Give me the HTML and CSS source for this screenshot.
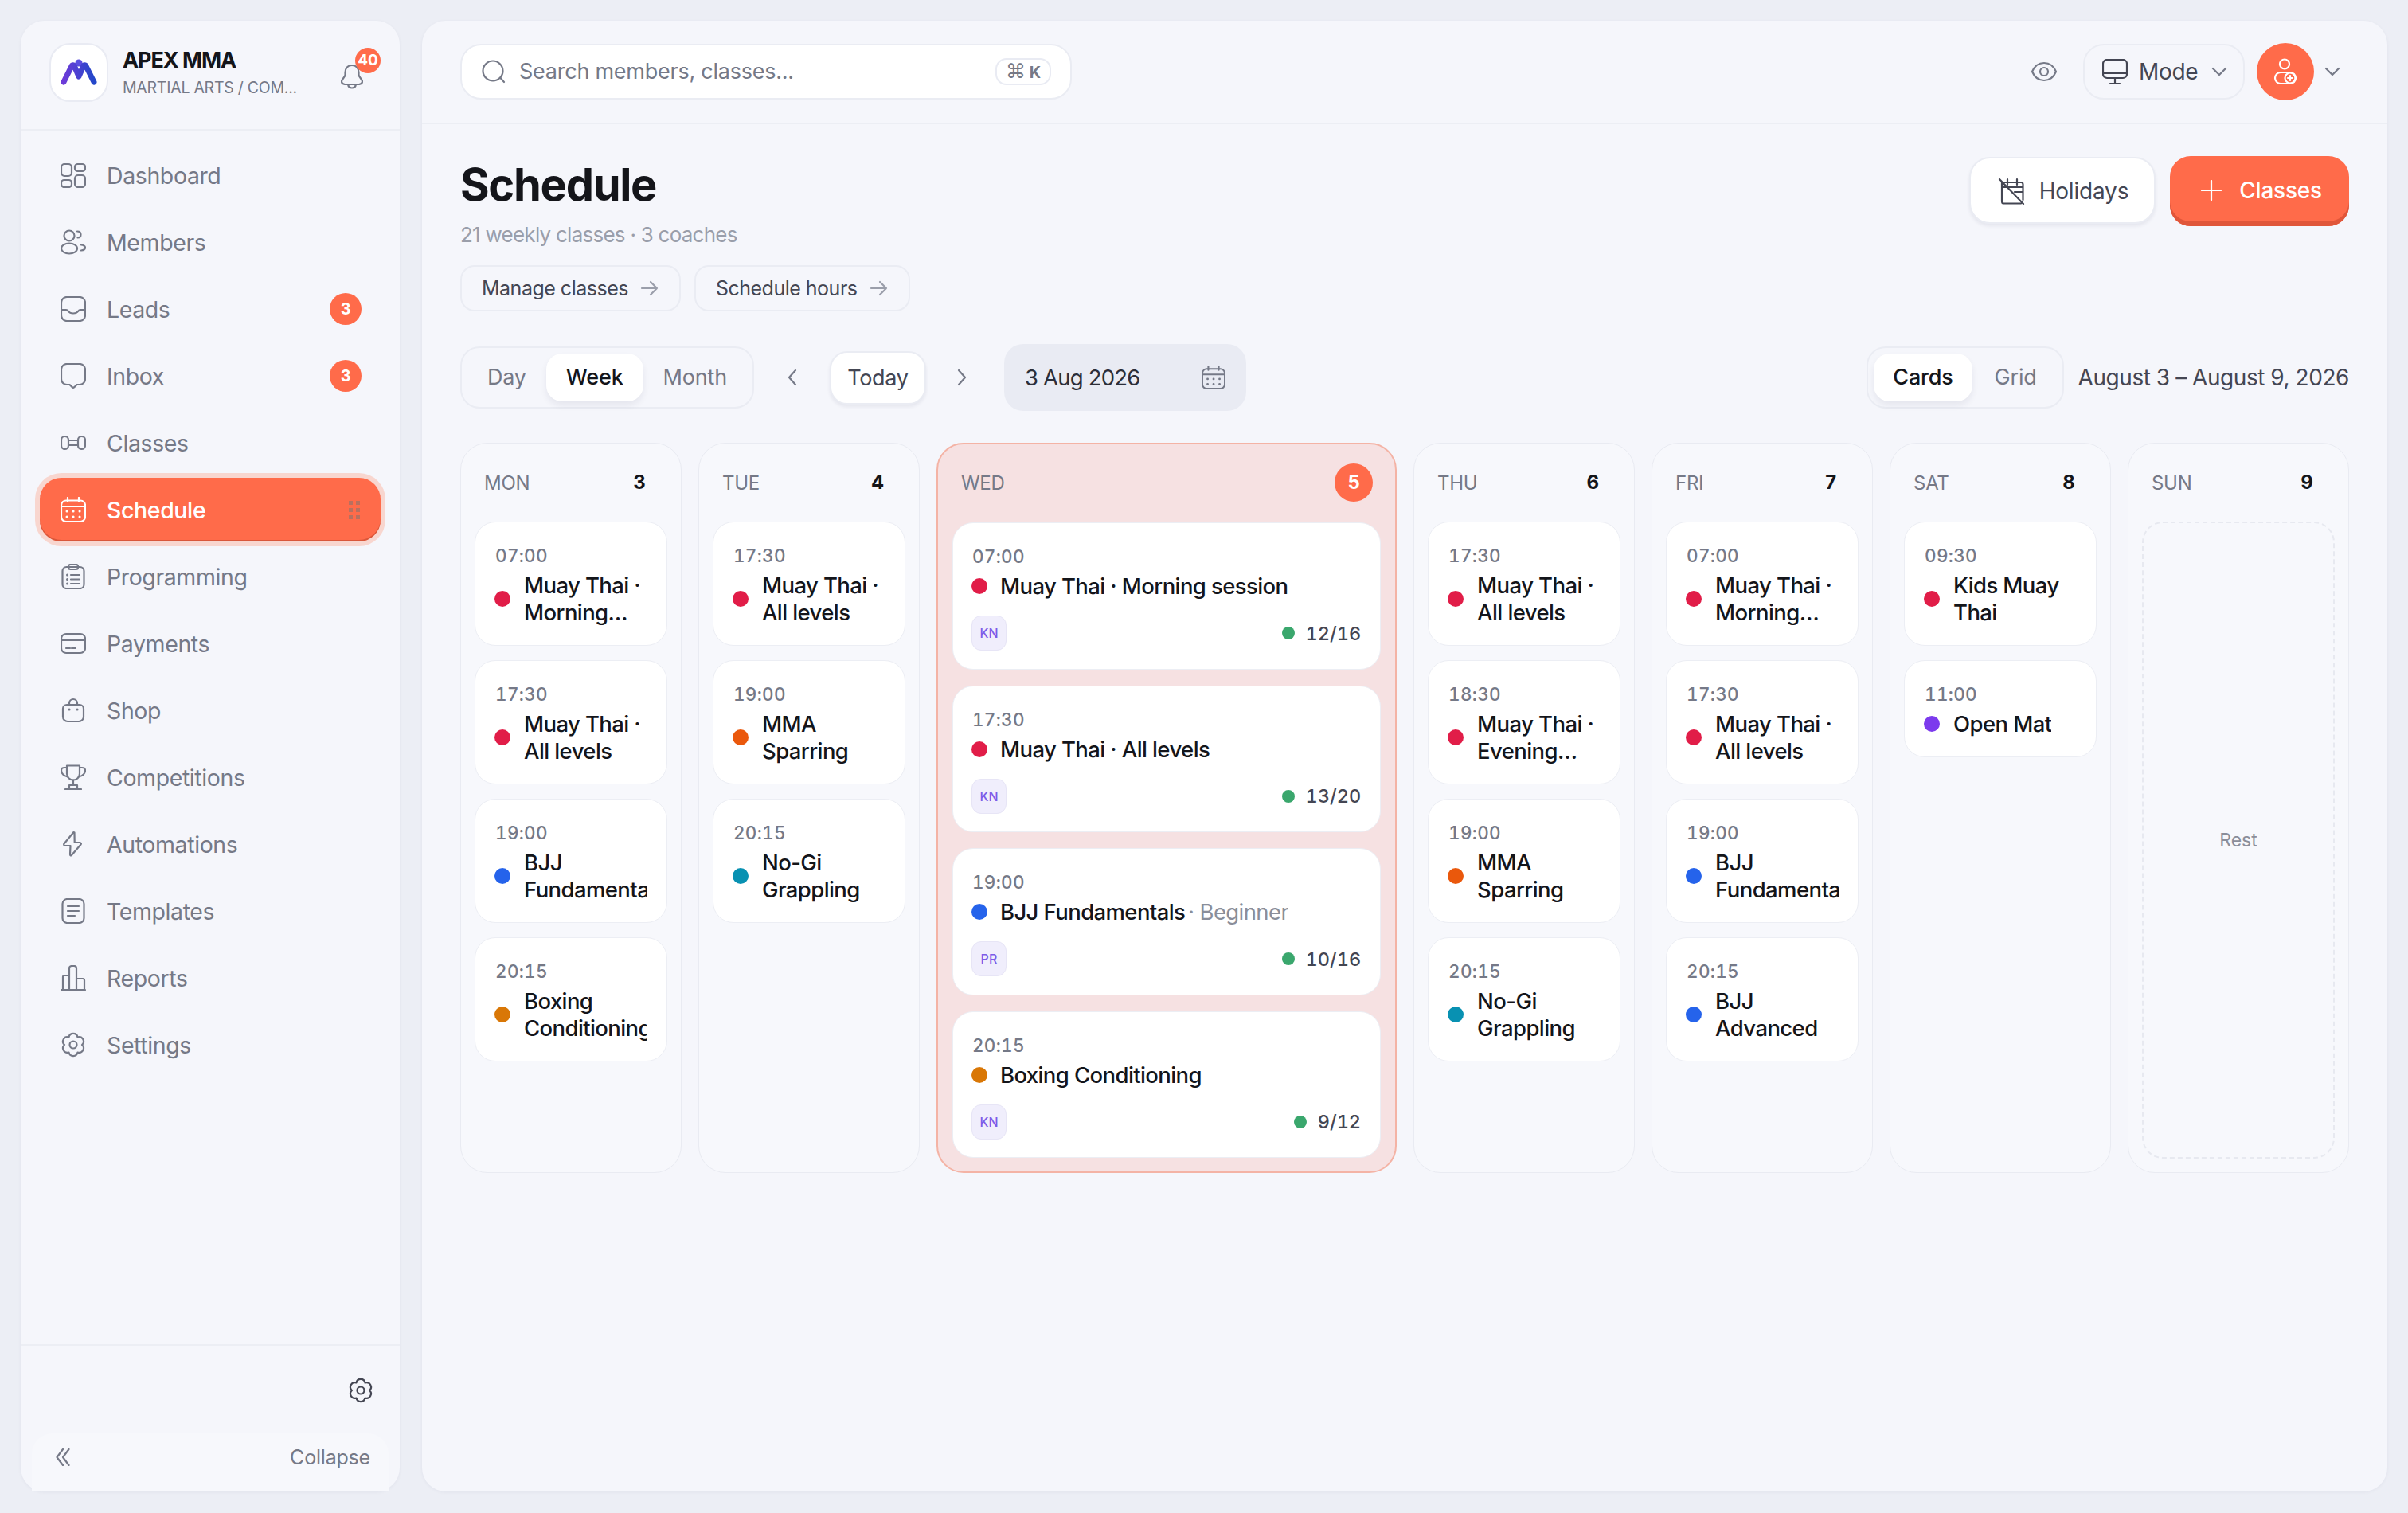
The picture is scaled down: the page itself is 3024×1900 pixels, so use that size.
FILE: index.html
```html
<!DOCTYPE html>
<html>
  <head>
    <title>Schedule</title>
    <link rel="stylesheet" href="styles.css">
  </head>
  <body>
    <svg class="defs" width="0" height="0">
      <symbol id="gear" viewBox="0 0 32 32">
        <path d="M10.5 6.47A5.6 5.6 0 0 1 21.5 6.47A5.6 5.6 0 0 1 27 16A5.6 5.6 0 0 1 21.5 25.53A5.6 5.6 0 0 1 10.5 25.53A5.6 5.6 0 0 1 5 16A5.6 5.6 0 0 1 10.5 6.47Z"/>
        <circle cx="16" cy="16" r="4.5"/>
      </symbol>
      <symbol id="chev-down" viewBox="0 0 20 12">
        <path d="M2 2l8 8 8-8"/>
      </symbol>
      <symbol id="arrow" viewBox="0 0 24 20">
        <path d="M2 10h19M13 2l8 8-8 8"/>
      </symbol>
    </svg>

    <div class="app">
      <aside class="sidebar">
        <div class="brand">
          <div class="brand-logo">
            <svg width="46" height="34" viewBox="0 0 46 34">
              <defs>
                <linearGradient id="logo-grad" x1="0" y1="0" x2="1" y2="0">
                  <stop offset="0" stop-color="#6d3bd8"/>
                  <stop offset="1" stop-color="#2347c9"/>
                </linearGradient>
              </defs>
              <circle cx="23" cy="5" r="4.5" fill="#5b4ee0"/>
              <path d="M4 29L14 9c.8-1.6 2.6-1.6 3.4 0L23 22l5.6-13c.8-1.6 2.6-1.6 3.4 0l10 20" fill="none" stroke="url(#logo-grad)" stroke-width="7" stroke-linecap="round" stroke-linejoin="round"/>
            </svg>
          </div>
          <div class="brand-text">
            <div class="brand-name">APEX MMA</div>
            <div class="brand-sub">MARTIAL ARTS / COM...</div>
          </div>
          <div class="bell">
            <svg class="ico" width="28" height="32" viewBox="0 0 28 32">
              <path d="M14 2C8.5 2 5.5 6 5.5 11v3c0 3-4.500 5-4.500 8.500 0 2 2 3 4 3.500h18c2-.5 4-1.500 4-3.500 0-3.500-4.500-5.500-4.500-8.500v-3C22.500 6 19.500 2 14 2z"/>
              <path d="M9 26c.5 3 2.500 4.500 5 4.500s4.500-1.500 5-4.500"/>
            </svg>
            <span class="bell-badge">40</span>
          </div>
        </div>

        <nav class="nav">
          <a class="nav-item">
            <svg class="ico" width="32" height="32" viewBox="0 0 32 32"><rect x="1" y="2" width="13" height="15" rx="4"/><rect x="1" y="22" width="13" height="9" rx="3.500"/><rect x="18" y="2" width="13" height="9" rx="3.500"/><rect x="18" y="16" width="13" height="15" rx="4"/></svg>
            <span>Dashboard</span>
          </a>
          <a class="nav-item">
            <svg class="ico" width="32" height="32" viewBox="0 0 32 32"><ellipse cx="11" cy="8" rx="6.500" ry="6.500"/><ellipse cx="11" cy="24" rx="10" ry="6.500"/><path d="M21 2.500c3 0 4.500 1.500 4.500 4s-1.500 4-4 4M26 19.500c3.500.5 5 2 5 3.500s-1.500 3-5 3.500"/></svg>
            <span>Members</span>
          </a>
          <a class="nav-item">
            <svg class="ico" width="32" height="32" viewBox="0 0 32 32"><rect x="1" y="1" width="30" height="30" rx="7"/><path d="M1 17h6c1.500 0 2 .6 3 2 1 1.500 2.500 2.500 6 2.500s5-1 6-2.500c1-1.400 1.500-2 3-2h6"/></svg>
            <span>Leads</span>
            <em class="nav-badge">3</em>
          </a>
          <a class="nav-item">
            <svg class="ico" width="32" height="32" viewBox="0 0 32 32"><path d="M8 1h16a7 7 0 0 1 7 7v12a7 7 0 0 1-7 7h-3.500l-3.200 3.200a2 2 0 0 1-2.600 0L11.500 27H8a7 7 0 0 1-7-7V8a7 7 0 0 1 7-7z"/></svg>
            <span>Inbox</span>
            <em class="nav-badge">3</em>
          </a>
          <a class="nav-item">
            <svg class="ico" width="32" height="32" viewBox="0 0 32 32"><rect x="1" y="8" width="9" height="16" rx="4.500"/><rect x="22" y="8" width="9" height="16" rx="4.500"/><path d="M10 13h12M10 19h12"/></svg>
            <span>Classes</span>
          </a>
          <a class="nav-item active">
            <svg class="ico" width="32" height="32" viewBox="0 0 32 32"><rect x="1" y="4.500" width="30" height="26.500" rx="6"/><path d="M1 12h30M9 1v5M23 1v5"/><path class="dots" d="M8 18h.1M16 18h.1M24 18h.1M8 25h.1M16 25h.1M24 25h.1"/></svg>
            <span>Schedule</span>
            <i class="grip"><b></b><b></b><b></b><b></b><b></b><b></b></i>
          </a>
          <a class="nav-item">
            <svg class="ico" width="32" height="32" viewBox="0 0 32 32"><rect x="2.500" y="4" width="27" height="27" rx="5"/><rect x="10" y="1" width="12" height="6" rx="2.500"/><path d="M13 14h11M13 19.500h11M13 25h11"/><path class="dots" d="M8.500 14h.1M8.500 19.500h.1M8.500 25h.1"/></svg>
            <span>Programming</span>
          </a>
          <a class="nav-item">
            <svg class="ico" width="32" height="32" viewBox="0 0 32 32"><rect x="1" y="4" width="30" height="24" rx="6"/><path d="M1 12h30M7 22h5M14 22h5"/></svg>
            <span>Payments</span>
          </a>
          <a class="nav-item">
            <svg class="ico" width="32" height="32" viewBox="0 0 32 32"><path d="M3 14a5 5 0 0 1 5-5h16a5 5 0 0 1 5 5v10a6 6 0 0 1-6 6H9a6 6 0 0 1-6-6z"/><path d="M11 9V7a5 5 0 0 1 10 0v2"/><path class="dots" d="M11 15h.1M21 15h.1"/></svg>
            <span>Shop</span>
          </a>
          <a class="nav-item">
            <svg class="ico" width="32" height="32" viewBox="0 0 32 32"><path d="M8 1.500h16v10a8 8 0 0 1-16 0z"/><path d="M8 4H5C2.500 4 1 5.500 1 7.500 1 11 4 14.500 9 15.500M24 4h3c2.500 0 4 1.500 4 3.500 0 3.500-3 7-8 8M16 19.500v6M11 26h10v4.500M11 26v4.500M6 31h20"/></svg>
            <span>Competitions</span>
          </a>
          <a class="nav-item">
            <svg class="ico" width="32" height="32" viewBox="0 0 32 32"><path d="M17.500 1.500c-.7-.5-1.500 0-2 .7L4.500 15.500c-.7 1-.2 2.500 1.300 2.500h6.700l-.5 11c0 1.500 1.200 2 2.100.8l11.400-13.300c.8-1 .3-2.500-1.300-2.500h-6.500z"/></svg>
            <span>Automations</span>
          </a>
          <a class="nav-item">
            <svg class="ico" width="32" height="32" viewBox="0 0 32 32"><rect x="2.500" y="1" width="27" height="30" rx="6"/><path d="M9 10h14M9 16h14M9 22h9"/></svg>
            <span>Templates</span>
          </a>
          <a class="nav-item">
            <svg class="ico" width="32" height="32" viewBox="0 0 32 32"><path d="M1 31h30M3 31V15a2 2 0 0 1 2-2h6M11 31V4a3 3 0 0 1 3-3h3a3 3 0 0 1 3 3v27M20 17h8a2 2 0 0 1 2 2v12"/></svg>
            <span>Reports</span>
          </a>
          <a class="nav-item">
            <svg class="ico" width="32" height="32"><use href="#gear"/></svg>
            <span>Settings</span>
          </a>
        </nav>

        <div class="side-foot">
          <div class="side-gear">
            <svg class="ico dark" width="32" height="32"><use href="#gear"/></svg>
          </div>
          <div class="collapse">
            <svg class="ico" width="18" height="22" viewBox="0 0 18 22"><path d="M9 1L1.500 11 9 21M16.500 1L9 11l7.500 10"/></svg>
            <span>Collapse</span>
          </div>
        </div>
      </aside>

      <main class="main">
        <header class="topbar">
          <div class="search">
            <svg class="ico" width="30" height="30" viewBox="0 0 30 30"><circle cx="14" cy="14" r="12.500"/><path d="M23.500 23l4.500 5"/></svg>
            <span class="search-text">Search members, classes...</span>
            <span class="kbd"><i>⌘</i> K</span>
          </div>
          <div class="top-right">
            <svg class="ico eye" width="32" height="32" viewBox="0 0 32 32"><path d="M1 16c3-7 8-11 15-11s12 4 15 11c-3 7-8 11-15 11S4 23 1 16z"/><circle cx="16" cy="16" r="5"/></svg>
            <div class="mode">
              <svg class="ico dark" width="32" height="32" viewBox="0 0 32 32"><rect x="1" y="1" width="30" height="23" rx="5"/><path d="M1 18h30M16 24v7M10 31h12"/></svg>
              <span>Mode</span>
              <svg class="ico chev" width="20" height="12"><use href="#chev-down"/></svg>
            </div>
            <div class="avatar">
              <svg class="ico" width="32" height="34" viewBox="0 0 32 34"><circle cx="15" cy="7.500" r="6"/><rect x="3" y="18" width="26" height="14" rx="7"/><circle cx="22" cy="25" r="6.500"/><path d="M22 22v6M19 25h6"/></svg>
            </div>
            <svg class="ico chev" width="20" height="12"><use href="#chev-down"/></svg>
          </div>
        </header>

        <div class="content">
          <div class="page-head">
            <div>
              <h1>Schedule</h1>
              <p class="subtitle">21 weekly classes · 3 coaches</p>
              <div class="links">
                <a class="link-btn">Manage classes <svg class="ico" width="24" height="20"><use href="#arrow"/></svg></a>
                <a class="link-btn">Schedule hours <svg class="ico" width="24" height="20"><use href="#arrow"/></svg></a>
              </div>
            </div>
            <div class="actions">
              <button class="btn-white">
                <svg class="ico dark" width="34" height="34" viewBox="0 0 34 34"><path d="M5 6v24c0 1.500 1 2.500 2.500 2.500H29M5 6h24c1.500 0 2.500 1 2.500 2.500V28M5 12h26M12 2v7M24 2v7M2 2l30 31M21 18h10"/></svg>
                Holidays
              </button>
              <button class="btn-primary">
                <svg class="ico" width="26" height="26" viewBox="0 0 26 26"><path d="M13 1v24M1 13h24"/></svg>
                Classes
              </button>
            </div>
          </div>

          <div class="toolbar">
            <div class="segment">
              <span>Day</span>
              <span class="on">Week</span>
              <span>Month</span>
            </div>
            <svg class="ico pager" width="12" height="22" viewBox="0 0 12 22"><path d="M10 2L2 11l8 9"/></svg>
            <button class="today">Today</button>
            <svg class="ico pager next" width="12" height="22" viewBox="0 0 12 22"><path d="M2 2l8 9-8 9"/></svg>
            <div class="datebox">
              <span>3 Aug 2026</span>
              <svg class="ico" width="30" height="30" viewBox="0 0 32 32"><rect x="1" y="4.500" width="30" height="26.500" rx="6"/><path d="M1 12h30M9 1v5M23 1v5"/><path class="dots" d="M8 18h.1M16 18h.1M24 18h.1M8 25h.1M16 25h.1M24 25h.1"/></svg>
            </div>
            <div class="toolbar-right">
              <div class="segment small">
                <span class="on">Cards</span>
                <span>Grid</span>
              </div>
              <span class="range">August 3 – August 9, 2026</span>
            </div>
          </div>

          <div class="week">
            <section class="day">
              <div class="day-head"><span>MON</span><b>3</b></div>
              <div class="card"><div class="time">07:00</div><div class="cls"><i class="dot red"></i><div class="name">Muay Thai · Morning session</div></div></div>
              <div class="card"><div class="time">17:30</div><div class="cls"><i class="dot red"></i><div class="name">Muay Thai · All levels</div></div></div>
              <div class="card"><div class="time">19:00</div><div class="cls"><i class="dot blue"></i><div class="name">BJJ Fundamentals</div></div></div>
              <div class="card"><div class="time">20:15</div><div class="cls"><i class="dot amber"></i><div class="name">Boxing Conditioning</div></div></div>
            </section>

            <section class="day">
              <div class="day-head"><span>TUE</span><b>4</b></div>
              <div class="card"><div class="time">17:30</div><div class="cls"><i class="dot red"></i><div class="name">Muay Thai · All levels</div></div></div>
              <div class="card"><div class="time">19:00</div><div class="cls"><i class="dot orange"></i><div class="name">MMA Sparring</div></div></div>
              <div class="card"><div class="time">20:15</div><div class="cls"><i class="dot teal"></i><div class="name">No-Gi Grappling</div></div></div>
            </section>

            <section class="day today-col">
              <div class="day-head"><span>WED</span><b>5</b></div>
              <div class="card">
                <div class="time">07:00</div>
                <div class="cls"><i class="dot red"></i><div class="name">Muay Thai · Morning session</div></div>
                <div class="card-foot"><span class="chip">KN</span><span class="count"><i></i>12/16</span></div>
              </div>
              <div class="card">
                <div class="time">17:30</div>
                <div class="cls"><i class="dot red"></i><div class="name">Muay Thai · All levels</div></div>
                <div class="card-foot"><span class="chip">KN</span><span class="count"><i></i>13/20</span></div>
              </div>
              <div class="card">
                <div class="time">19:00</div>
                <div class="cls"><i class="dot blue"></i><div class="name">BJJ Fundamentals <small>· Beginner</small></div></div>
                <div class="card-foot"><span class="chip">PR</span><span class="count"><i></i>10/16</span></div>
              </div>
              <div class="card">
                <div class="time">20:15</div>
                <div class="cls"><i class="dot amber"></i><div class="name">Boxing Conditioning</div></div>
                <div class="card-foot"><span class="chip">KN</span><span class="count"><i></i>9/12</span></div>
              </div>
            </section>

            <section class="day">
              <div class="day-head"><span>THU</span><b>6</b></div>
              <div class="card"><div class="time">17:30</div><div class="cls"><i class="dot red"></i><div class="name">Muay Thai · All levels</div></div></div>
              <div class="card"><div class="time">18:30</div><div class="cls"><i class="dot red"></i><div class="name">Muay Thai · Evening session</div></div></div>
              <div class="card"><div class="time">19:00</div><div class="cls"><i class="dot orange"></i><div class="name">MMA Sparring</div></div></div>
              <div class="card"><div class="time">20:15</div><div class="cls"><i class="dot teal"></i><div class="name">No-Gi Grappling</div></div></div>
            </section>

            <section class="day">
              <div class="day-head"><span>FRI</span><b>7</b></div>
              <div class="card"><div class="time">07:00</div><div class="cls"><i class="dot red"></i><div class="name">Muay Thai · Morning session</div></div></div>
              <div class="card"><div class="time">17:30</div><div class="cls"><i class="dot red"></i><div class="name">Muay Thai · All levels</div></div></div>
              <div class="card"><div class="time">19:00</div><div class="cls"><i class="dot blue"></i><div class="name">BJJ Fundamentals</div></div></div>
              <div class="card"><div class="time">20:15</div><div class="cls"><i class="dot blue"></i><div class="name">BJJ Advanced</div></div></div>
            </section>

            <section class="day">
              <div class="day-head"><span>SAT</span><b>8</b></div>
              <div class="card"><div class="time">09:30</div><div class="cls"><i class="dot red"></i><div class="name">Kids Muay Thai</div></div></div>
              <div class="card"><div class="time">11:00</div><div class="cls"><i class="dot purple"></i><div class="name">Open Mat</div></div></div>
            </section>

            <section class="day">
              <div class="day-head"><span>SUN</span><b>9</b></div>
              <div class="rest">Rest</div>
            </section>
          </div>
        </div>
      </main>
    </div>
  </body>
</html>
```

FILE: styles.css
```css
* {
  box-sizing: border-box;
}

html,
body {
  margin: 0;
  height: 100%;
}

body {
  background-color: #eceef5;
  color: #14151a;
  font-family: Inter, "DejaVu Sans", sans-serif;
  font-size: 28px;
}

.defs {
  position: absolute;
}

.ico {
  flex: none;
  fill: none;
  stroke: #757987;
  stroke-width: 2.2;
  stroke-linecap: round;
  stroke-linejoin: round;
}

.ico.dark {
  stroke: #444653;
}

.ico .dots {
  stroke-width: 3;
}

.app {
  display: grid;
  grid-template-columns: 476px 1fr;
  gap: 28px;
  height: 1900px;
  padding: 26px 26px 27px;
}

/* sidebar */

.sidebar {
  display: flex;
  flex-direction: column;
  background-color: #f5f6fb;
  border-radius: 30px;
  box-shadow: 0 1px 4px rgba(30, 35, 70, 0.05);
}

.brand {
  display: flex;
  align-items: center;
  height: 138px;
  padding: 0 24px 7px 36px;
  border-bottom: 2px solid #eceef4;
}

.brand-logo {
  display: flex;
  align-items: center;
  justify-content: center;
  width: 74px;
  height: 74px;
  background-color: #fff;
  border: 2px solid #e9ebf3;
  border-radius: 26px;
}

.brand-text {
  flex: 1;
  margin-left: 18px;
}

.brand-name {
  font-size: 27px;
  font-weight: 700;
  line-height: 36px;
  letter-spacing: -1.1px;
}

.brand-sub {
  margin-top: 3px;
  color: #757987;
  font-size: 19.5px;
  line-height: 26px;
  letter-spacing: -0.25px;
}

.bell {
  position: relative;
  width: 28px;
  height: 32px;
  margin-right: 22px;
  margin-top: 10px;
}

.bell-badge {
  position: absolute;
  top: -20px;
  left: 18px;
  width: 32px;
  height: 32px;
  border-radius: 50%;
  background-color: #ff6b4a;
  color: #fff;
  font-size: 19px;
  font-weight: 700;
  line-height: 32px;
  text-align: center;
}

.nav {
  display: flex;
  flex-direction: column;
  gap: 4px;
  padding: 16px 24px 0;
}

.nav-item {
  display: flex;
  align-items: center;
  gap: 26px;
  height: 80px;
  padding: 0 24px 0 26px;
  color: #757987;
  font-size: 28.5px;
  letter-spacing: -0.4px;
  border-radius: 27px;
}

.nav-item span {
  flex: 1;
}

.nav-badge {
  width: 40px;
  height: 40px;
  border-radius: 50%;
  background-color: #ff6b4a;
  color: #fff;
  font-size: 20px;
  font-style: normal;
  font-weight: 700;
  line-height: 40px;
  text-align: center;
}

.nav-item.active {
  background-color: #ff6b4a;
  color: #fff;
  font-weight: 500;
  box-shadow: inset 0 -2px 0 #d9573a, 0 0 0 6px #f8d6cf;
}

.nav-item.active .ico {
  stroke: #fff;
}

.grip {
  display: grid;
  grid-template-columns: 5px 5px;
  gap: 4px;
  margin-right: 2px;
}

.grip b {
  width: 5px;
  height: 5px;
  background-color: #b9705f;
}

.side-foot {
  margin-top: auto;
  border-top: 2px solid #eceef4;
}

.side-gear {
  display: flex;
  justify-content: flex-end;
  padding: 40px 33px 38px 0;
}

.collapse {
  display: flex;
  align-items: center;
  justify-content: space-between;
  height: 73px;
  margin: 0 14px;
  padding: 0 23px 14px 30px;
  background-color: #f7f8fc;
  border-radius: 26px 26px 0 0;
  color: #757987;
  font-size: 25px;
  letter-spacing: -0.2px;
}

/* main */

.main {
  display: flex;
  flex-direction: column;
  background-color: #f5f6fb;
  border-radius: 30px;
  box-shadow: 0 1px 4px rgba(30, 35, 70, 0.05);
}

.topbar {
  display: flex;
  align-items: center;
  justify-content: space-between;
  height: 130px;
  padding: 0 48px 1px;
  border-bottom: 2px solid #eceef4;
}

.search {
  display: flex;
  align-items: center;
  width: 768px;
  height: 70px;
  padding: 0 24px 0 25px;
  background-color: #fff;
  border: 2px solid #eaecf3;
  border-radius: 26px;
}

.search-text {
  flex: 1;
  margin-left: 17px;
  color: #757987;
  font-size: 27px;
  letter-spacing: -0.25px;
}

.kbd {
  width: 70px;
  height: 34px;
  border: 2px solid #e9ebf3;
  border-radius: 14px;
  color: #757987;
  font-size: 20px;
  font-weight: 700;
  line-height: 28px;
  text-align: center;
}

.kbd i {
  font-size: 25px;
  font-style: normal;
  font-weight: 400;
}

.top-right {
  display: flex;
  align-items: center;
  padding-right: 11px;
}

.eye {
  margin-right: 33px;
}

.mode {
  display: flex;
  align-items: center;
  width: 203px;
  height: 70px;
  padding-left: 22px;
  border: 2px solid #eaecf3;
  border-radius: 26px;
  color: #444653;
  font-size: 28px;
  letter-spacing: -0.3px;
}

.mode span {
  margin: 0 17px 0 14px;
}

.avatar {
  display: flex;
  align-items: center;
  justify-content: center;
  width: 72px;
  height: 72px;
  margin: 0 13px 0 15px;
  border-radius: 50%;
  background-color: #ff6b4a;
}

.avatar .ico {
  stroke: #fff;
}

.content {
  padding: 41px 48px 0;
}

.page-head {
  display: flex;
  justify-content: space-between;
  align-items: flex-start;
}

h1 {
  margin: 0;
  font-size: 56px;
  font-weight: 700;
  line-height: 70px;
  letter-spacing: -1.3px;
}

.subtitle {
  margin: 13px 0 0;
  color: #9a9eaa;
  font-size: 26px;
  line-height: 30px;
  letter-spacing: -0.75px;
}

.links {
  display: flex;
  gap: 17px;
  margin-top: 23px;
}

.link-btn {
  display: flex;
  align-items: center;
  gap: 15px;
  height: 58px;
  padding: 0 25px;
  border: 2px solid #eaecf3;
  border-radius: 18px;
  color: #444653;
  font-size: 25px;
  letter-spacing: -0.5px;
}

.link-btn .ico {
  stroke: #9a9eaa;
}

.actions {
  display: flex;
  gap: 18px;
}

.btn-white,
.btn-primary {
  display: flex;
  align-items: center;
  border: none;
  font-family: inherit;
  font-size: 28px;
  letter-spacing: -0.2px;
}

.btn-white {
  gap: 18px;
  height: 84px;
  padding: 2px 32px 0 34px;
  background-color: #fff;
  border: 2px solid #eaecf3;
  border-radius: 26px;
  color: #444653;
  box-shadow: 0 3px 4px rgba(30, 35, 70, 0.07);
}

.btn-primary {
  gap: 22px;
  height: 88px;
  margin-top: -1px;
  padding: 0 34px 3px 39px;
  background-color: #ff6b4a;
  border-radius: 26px;
  color: #fff;
  font-weight: 500;
  box-shadow: inset 0 -6px 0 #e0563a;
}

.btn-primary .ico {
  stroke: #fff;
}

.toolbar {
  display: flex;
  align-items: center;
  height: 84px;
  margin-top: 41px;
}

.segment {
  display: flex;
  align-items: center;
  height: 78px;
  padding: 0 7px;
  border: 2px solid #eaecf3;
  border-radius: 24px;
  color: #757987;
  font-size: 27px;
  letter-spacing: -0.2px;
}

.segment span {
  padding: 0 25px;
  line-height: 60px;
}

.segment .on {
  background-color: #fff;
  border-radius: 20px;
  color: #14151a;
  font-weight: 500;
  box-shadow: 0 5px 8px rgba(30, 35, 70, 0.07);
}

.pager {
  margin: 0 41px 0 42px;
}

.pager.next {
  margin: 0 47px 0 39px;
}

.today {
  width: 121px;
  height: 67px;
  padding: 0;
  background-color: #fff;
  border: 2px solid #eaecf3;
  border-radius: 22px;
  color: #444653;
  font-family: inherit;
  font-size: 27px;
  letter-spacing: -0.3px;
  box-shadow: 0 3px 4px rgba(30, 35, 70, 0.07);
}

.datebox {
  display: flex;
  align-items: center;
  justify-content: space-between;
  width: 304px;
  height: 84px;
  padding: 0 26px;
  background-color: #e9ebf3;
  border-radius: 24px;
  color: #2c2e38;
  font-size: 27.5px;
  letter-spacing: -0.8px;
}

.toolbar-right {
  display: flex;
  align-items: center;
  margin-left: auto;
}

.segment.small .on {
  padding: 0 24px;
}

.segment.small span:last-child {
  padding: 0 25px 0 28px;
}

.range {
  margin-left: 18px;
  color: #444653;
  font-size: 28px;
  letter-spacing: -0.45px;
}

/* week grid */

.week {
  display: grid;
  grid-template-columns: 1fr 1fr 2.08fr 1fr 1fr 1fr 1fr;
  gap: 21px;
  margin-top: 40px;
}

.day {
  display: flex;
  flex-direction: column;
  gap: 18px;
  min-width: 0;
  padding: 25px 17px 17px;
  background-color: #f7f8fc;
  border: 1px solid #e9ebf2;
  border-radius: 34px;
}

.day-head {
  display: flex;
  align-items: center;
  justify-content: space-between;
  height: 48px;
  margin-bottom: 7px;
  padding: 0 12px;
  color: #757987;
  font-size: 24px;
  letter-spacing: -0.3px;
}

.day-head b {
  width: 48px;
  margin-right: -1px;
  color: #14151a;
  font-size: 24px;
  font-weight: 700;
  line-height: 48px;
  text-align: center;
}

.today-col {
  gap: 20px;
  padding: 24px 18px 17px;
  background-color: #f6e1e2;
  border: 2px solid #f4b3a5;
}

.today-col .day-head {
  margin-bottom: 6px;
  padding: 0 11px;
}

.today-col .day-head b {
  border-radius: 50%;
  background-color: #ff6b4a;
  color: #fff;
}

.card {
  padding: 27px 24px 24px;
  background-color: #fff;
  border: 1px solid #eceef4;
  border-radius: 26px;
}

.today-col .card {
  padding: 27px 24px 22.5px 23px;
}

.today-col .cls {
  gap: 16px;
}

.time {
  padding-left: 1px;
  color: #757987;
  font-size: 22.5px;
  font-weight: 500;
  font-variant-numeric: tabular-nums;
  line-height: 30px;
  letter-spacing: 0.3px;
}

.cls {
  display: flex;
  align-items: center;
  gap: 17px;
  margin-top: 5px;
}

.dot {
  flex: none;
  width: 20px;
  height: 20px;
  border-radius: 50%;
}

.red { background-color: #e11d48; }
.blue { background-color: #2563eb; }
.amber { background-color: #d97706; }
.orange { background-color: #ea580c; }
.teal { background-color: #0891b2; }
.purple { background-color: #7c3aed; }

.name {
  display: -webkit-box;
  -webkit-box-orient: vertical;
  -webkit-line-clamp: 2;
  overflow: hidden;
  min-width: 0;
  font-size: 27.5px;
  font-weight: 500;
  line-height: 34px;
  letter-spacing: -0.6px;
}

.name small {
  margin-left: -3px;
  color: #8a8e9a;
  font-size: 27.5px;
  font-weight: 400;
}

.card-foot {
  display: flex;
  align-items: center;
  justify-content: space-between;
  margin-top: 20px;
}

.chip {
  width: 44px;
  height: 44px;
  background-color: #f0eefc;
  border: 1px solid #e7e5f6;
  border-radius: 12px;
  color: #7c5ce8;
  font-size: 16px;
  font-weight: 500;
  line-height: 42px;
  text-align: center;
}

.count {
  display: flex;
  align-items: center;
  gap: 14px;
  color: #444653;
  font-size: 23.5px;
  font-weight: 500;
  font-variant-numeric: tabular-nums;
  letter-spacing: 0;
}

.count i {
  width: 16px;
  height: 16px;
  border-radius: 50%;
  background-color: #3aa76d;
}

.rest {
  display: flex;
  flex: 1;
  align-items: center;
  justify-content: center;
  border: 2px dashed #e7e9f0;
  border-radius: 26px;
  color: #8a8e9a;
  font-size: 23px;
}
```
